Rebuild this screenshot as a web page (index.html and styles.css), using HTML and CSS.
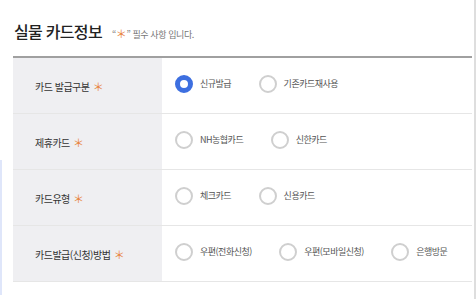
FILE: index.html
```html
<!DOCTYPE html>
<html lang="ko">

<head>
    <meta charset="UTF-8">
    <meta name="viewport" content="width=device-width, initial-scale=1.0">
    <title>실물 카드정보</title>
    <link rel="stylesheet" href="styles.css">
</head>

<body>
    <div class="popup">
        <div class="popupHead">
            <h2>실물 카드정보</h2>
            <p class="note">“<span class="req">＊</span>” 필수 사항 입니다.</p>
        </div>

        <table class="formTable">
            <colgroup>
                <col class="labelCol">
                <col>
            </colgroup>
            <tbody>
                <tr>
                    <th>카드 발급구분 <span class="req">＊</span></th>
                    <td>
                        <label class="radio"><input type="radio" name="issueType" checked><span class="mark"></span>신규발급</label>
                        <label class="radio"><input type="radio" name="issueType"><span class="mark"></span>기존카드재사용</label>
                    </td>
                </tr>
                <tr>
                    <th>제휴카드 <span class="req">＊</span></th>
                    <td>
                        <label class="radio"><input type="radio" name="partner"><span class="mark"></span>NH농협카드</label>
                        <label class="radio"><input type="radio" name="partner"><span class="mark"></span>신한카드</label>
                    </td>
                </tr>
                <tr>
                    <th>카드유형 <span class="req">＊</span></th>
                    <td>
                        <label class="radio"><input type="radio" name="cardType"><span class="mark"></span>체크카드</label>
                        <label class="radio"><input type="radio" name="cardType"><span class="mark"></span>신용카드</label>
                    </td>
                </tr>
                <tr>
                    <th>카드발급(신청)방법 <span class="req">＊</span></th>
                    <td>
                        <label class="radio"><input type="radio" name="method"><span class="mark"></span>우편(전화신청)</label>
                        <label class="radio"><input type="radio" name="method"><span class="mark"></span>우편(모바일신청)</label>
                        <label class="radio"><input type="radio" name="method"><span class="mark"></span>은행방문</label>
                    </td>
                </tr>
            </tbody>
        </table>
    </div>
</body>

</html>
```

FILE: styles.css
```css
body {
    font-family: "Noto Sans CJK KR", "Noto Sans", sans-serif;
    margin: 0;
    background-color: #fff;
    color: #333;
}

body::before {
    content: "";
    position: fixed;
    left: 0;
    top: 160px;
    width: 2px;
    height: 135px;
    background-color: #dfe6fa;
}

.popup {
    width: 459px;
    height: 299px;
    padding-left: 13px;
    padding-right: 2px;
    border-right: 2px solid #dedede;
    background-color: #fff;
}

.popupHead {
    display: flex;
    align-items: baseline;
    height: 56px;
    padding-left: 1px;
    box-sizing: border-box;
    padding-top: 19px;
}

h2 {
    margin: 0;
    font-size: 16px;
    font-weight: 500;
    line-height: 24px;
    color: #222;
    letter-spacing: -0.7px;
}

.note {
    margin: 0 0 0 10px;
    font-size: 9px;
    color: #777;
    letter-spacing: -0.4px;
}

.req {
    color: #e8823a;
    font-size: 11px;
}

.formTable {
    width: 100%;
    table-layout: fixed;
    border-collapse: collapse;
    border-top: 2px solid #a0a0a0;
}

.labelCol {
    width: 149px;
}

.formTable th,
.formTable td {
    height: 55px;
    padding: 0;
    border-bottom: 1px solid #e6e6e6;
    text-align: left;
    font-weight: 400;
    white-space: nowrap;
}

.formTable th {
    padding-left: 22px;
    background-color: #efeff2;
    font-size: 10px;
    color: #333;
    letter-spacing: -0.5px;
}

.formTable th .req {
    font-size: 11px;
    margin-left: 1px;
}

.formTable td {
    padding-left: 13px;
}

.radio {
    display: inline-flex;
    align-items: center;
    margin-right: 23px;
    font-size: 9px;
    color: #555;
    letter-spacing: -0.5px;
    cursor: pointer;
}

.radio input {
    display: none;
}

.mark {
    width: 18px;
    height: 18px;
    margin-right: 7px;
    border: 2px solid #cfcfcf;
    border-radius: 50%;
    box-sizing: border-box;
}

.radio input:checked + .mark {
    border: 5px solid #3d6fe0;
}
```
